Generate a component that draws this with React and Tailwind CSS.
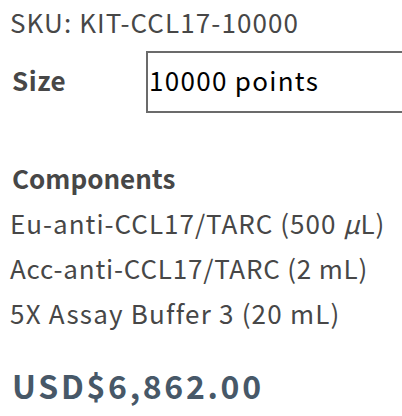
export default function App() {
  return (
    <div
      className="w-[402px] h-[416px] overflow-hidden bg-white text-[#474747] pl-[10px]"
      style={{ fontFamily: '"Noto Sans CJK KR", "Noto Sans", sans-serif' }}
    >
      <p className="text-[26px] leading-[44px] tracking-[1.1px] whitespace-nowrap">SKU: KIT-CCL17-10000</p>

      {/* size selector */}
      <div className="flex mt-[7px]">
        <span className="w-[136px] shrink-0 pl-[2px] pb-[6px] flex items-center text-[26px] font-bold tracking-[0.5px]">
          Size
        </span>
        <div className="w-[300px] shrink-0 h-[62px] border-2 border-[#6b6b6b] flex items-center pl-[1px] pb-[6px] text-[26px] tracking-[1.3px] text-black whitespace-nowrap">
          10000 points
        </div>
      </div>

      <div className="mt-[43px]">
        <h3 className="text-[26px] font-bold leading-[44px] pl-[2px]">Components</h3>
        <ul className="text-[26px] leading-[45px] tracking-[1px] whitespace-nowrap">
          <li>
            Eu-anti-CCL17/TARC (500 <i>μ</i>L)
          </li>
          <li className="tracking-[0.8px]">Acc-anti-CCL17/TARC (2 mL)</li>
          <li className="tracking-[1.2px]">5X Assay Buffer 3 (20 mL)</li>
        </ul>
      </div>

      <p className="mt-[28px] pl-[2px] text-[32px] font-bold leading-[44px] tracking-[2.7px] text-[#475868] whitespace-nowrap">
        USD$6,862.00
      </p>
    </div>
  );
}
